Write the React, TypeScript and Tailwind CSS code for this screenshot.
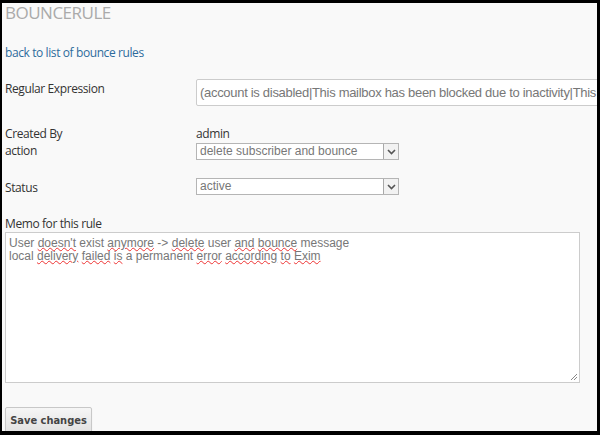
import React from 'react';

const FONT = 'font-["Open_Sans",sans-serif] text-[12px] tracking-[-0.4px]';
const LABEL = `${FONT} text-[#333]`;
const FIELD = 'font-["Liberation_Sans",Arial,sans-serif] text-[12px] text-[#777]';

function Chevron() {
  return (
    <svg width="9" height="6" viewBox="0 0 9 6" fill="none">
      <path d="M1 1l3.5 3.5L8 1" stroke="#555" strokeWidth="1.6" />
    </svg>
  );
}

function FakeSelect({ value }: { value: string }) {
  return (
    <div className="flex h-[17px] w-[203px] items-stretch border border-[#b5b5b5] bg-white">
      <span className={`${FIELD} flex-1 pl-[3px] leading-[15px] whitespace-nowrap overflow-hidden`}>{value}</span>
      <span className="flex w-[15px] items-center justify-center border-l border-[#a9a9a9] bg-[#f2f2f2]">
        <Chevron />
      </span>
    </div>
  );
}

function Squiggle({ children }: { children: React.ReactNode }) {
  return (
    <span className="underline decoration-wavy decoration-[#e33] decoration-1 underline-offset-0">{children}</span>
  );
}

export default function App() {
  return (
    <div className="h-[435px] w-[600px] bg-black pt-[3px] pl-[2px] pr-[3px] pb-[4px]">
      <div className="h-full w-full overflow-hidden bg-[#f9f9f9] pl-[3px]">
        <h1 className='font-["Open_Sans",sans-serif] text-[17px] leading-[18px] tracking-[-0.5px] text-[#aaa] pt-[1px]'>
          BOUNCERULE
        </h1>

        <a href="#" className={`${FONT} mt-[23px] block leading-[15px] text-[#2e6c9c]`}>
          back to list of bounce rules
        </a>

        {/* Regular expression */}
        <div className="mt-[19px] flex items-start">
          <label className={`${LABEL} w-[191px] shrink-0 pt-[2px] leading-[16px]`}>Regular Expression</label>
          <div className="flex h-[27px] min-w-[420px] items-center rounded-[2px] border border-[#ccc] bg-white pl-[3px]">
            <span className={`${FIELD} text-[13px] tracking-[-0.3px] whitespace-nowrap`}>
              (account is disabled|This mailbox has been blocked due to inactivity|This mailbox is disabled)
            </span>
          </div>
        </div>

        {/* Created by */}
        <div className="mt-[20px] flex">
          <span className={`${LABEL} w-[191px] shrink-0 leading-[16px]`}>Created By</span>
          <span className={`${LABEL} leading-[16px]`}>admin</span>
        </div>

        <div className="mt-[1px] flex items-start">
          <span className={`${LABEL} w-[191px] shrink-0 leading-[16px]`}>action</span>
          <FakeSelect value="delete subscriber and bounce" />
        </div>

        <div className="mt-[18px] flex items-start">
          <span className={`${LABEL} w-[191px] shrink-0 pt-[2px] leading-[16px]`}>Status</span>
          <FakeSelect value="active" />
        </div>

        {/* Memo */}
        <div className={`${LABEL} mt-[20px] leading-[16px]`}>Memo for this rule</div>
        <div className="relative h-[151px] w-[575px] border border-[#ccc] bg-white px-[3px] pt-[4px]">
          <p className={`${FIELD} leading-[13px]`}>
            User <Squiggle>doesn't</Squiggle> exist <Squiggle>anymore</Squiggle> -&gt; <Squiggle>delete</Squiggle> user{' '}
            <Squiggle>and</Squiggle> <Squiggle>bounce</Squiggle> message
            <br />
            local <Squiggle>delivery</Squiggle> <Squiggle>failed</Squiggle> <Squiggle>is</Squiggle> a permanent{' '}
            <Squiggle>error</Squiggle> <Squiggle>according</Squiggle> <Squiggle>to</Squiggle> <Squiggle>Exim</Squiggle>
          </p>
          <svg className="absolute right-[1px] bottom-[1px]" width="8" height="8" viewBox="0 0 8 8">
            <path d="M7 1L1 7M7 4L4 7" stroke="#888" strokeWidth="1" />
          </svg>
        </div>

        <button className='mt-[24px] h-[30px] w-[87px] rounded-[2px] border border-[#c8c8c8] bg-gradient-to-b from-[#f6f6f6] to-[#dedede] pb-[2px] font-["DejaVu_Sans_Condensed","DejaVu_Sans",sans-serif] text-[11px] font-bold text-[#444] shadow-[0_1px_1px_rgba(0,0,0,0.15)]'>
          Save changes
        </button>
      </div>
    </div>
  );
}
